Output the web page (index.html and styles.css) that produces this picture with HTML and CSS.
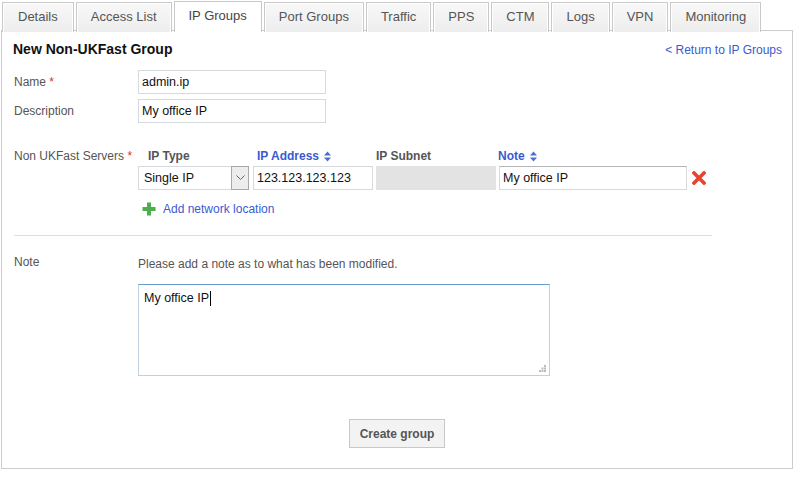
FILE: index.html
```html
<!DOCTYPE html>
<html>
<head>
<meta charset="utf-8">
<link rel="stylesheet" href="styles.css">
</head>
<body>
<div class="page">
  <div class="tabs">
    <div class="tab">Details</div>
    <div class="tab">Access List</div>
    <div class="tab active">IP Groups</div>
    <div class="tab">Port Groups</div>
    <div class="tab">Traffic</div>
    <div class="tab">PPS</div>
    <div class="tab">CTM</div>
    <div class="tab">Logs</div>
    <div class="tab">VPN</div>
    <div class="tab">Monitoring</div>
  </div>
  <div class="panel">
    <div class="head">
      <h1 class="title">New Non-UKFast Group</h1>
      <a class="return" href="#">&lt; Return to IP Groups</a>
    </div>

    <div class="row row-name">
      <label class="label">Name <span class="req">*</span></label>
      <input class="field" type="text" value="admin.ip">
    </div>
    <div class="row row-desc">
      <label class="label">Description</label>
      <input class="field" type="text" value="My office IP">
    </div>

    <div class="servers">
      <div class="label label-servers">Non UKFast Servers <span class="req">*</span></div>
      <div class="table">
        <div class="thead">
          <div class="th th-type">IP Type</div>
          <div class="th th-ip sortable">IP Address
            <svg class="sort" width="7" height="11" viewBox="0 0 7 11"><path d="M3.5 0.5 L7 4.5 H0 Z" fill="#4a6fd6"/><path d="M3.5 10.5 L7 6.5 H0 Z" fill="#4a6fd6"/></svg>
          </div>
          <div class="th th-subnet">IP Subnet</div>
          <div class="th th-note sortable">Note
            <svg class="sort" width="7" height="11" viewBox="0 0 7 11"><path d="M3.5 0.5 L7 4.5 H0 Z" fill="#4a6fd6"/><path d="M3.5 10.5 L7 6.5 H0 Z" fill="#4a6fd6"/></svg>
          </div>
        </div>
        <div class="trow">
          <div class="select">
            <span class="select-text">Single IP</span>
            <span class="select-btn">
              <svg width="9" height="6" viewBox="0 0 9 6"><path d="M0.5 0.5 L4.5 4.5 L8.5 0.5" fill="none" stroke="#666" stroke-width="1"/></svg>
            </span>
          </div>
          <input class="cell cell-ip" type="text" value="123.123.123.123">
          <div class="cell cell-subnet"></div>
          <input class="cell cell-note" type="text" value="My office IP">
          <svg class="remove" width="14" height="14" viewBox="0 0 14 14"><path d="M2 2 L12 12 M12 2 L2 12" stroke="#e8432f" stroke-width="3.6" stroke-linecap="square"/></svg>
        </div>
        <a class="add" href="#">
          <svg class="plus" width="14" height="14" viewBox="0 0 14 14"><path d="M7 0.5 V13.5 M0.5 7 H13.5" stroke="#4cae4c" stroke-width="4"/></svg>
          <span>Add network location</span>
        </a>
      </div>
    </div>

    <hr class="sep">

    <div class="note-row">
      <div class="label label-note">Note</div>
      <div class="note-body">
        <p class="hint">Please add a note as to what has been modified.</p>
        <div class="textarea">My office IP<span class="caret"></span>
          <svg class="grip" width="7" height="7" viewBox="0 0 7 7"><rect x="5" y="0" width="2" height="2" fill="#bbb"/><rect x="2.5" y="2.5" width="2" height="2" fill="#bbb"/><rect x="5" y="2.5" width="2" height="2" fill="#bbb"/><rect x="0" y="5" width="2" height="2" fill="#bbb"/><rect x="2.5" y="5" width="2" height="2" fill="#bbb"/><rect x="5" y="5" width="2" height="2" fill="#bbb"/></svg>
        </div>
      </div>
    </div>

    <div class="actions">
      <button class="btn" type="button">Create group</button>
    </div>
  </div>
</div>
</body>
</html>
```

FILE: styles.css
```css
* { box-sizing: border-box; }
html, body { margin: 0; padding: 0; background: #fff; }
body {
  font-family: "Liberation Sans", Arial, sans-serif;
  font-size: 12px;
  color: #555;
}
.page {
  width: 793px;
  padding: 1px 0 0 1px;
}
.tabs {
  display: flex;
  gap: 2px;
  padding-left: 1px;
  height: 30px;
  position: relative;
  z-index: 2;
}
.tab {
  height: 30px;
  margin-top: 1px;
  padding: 0 14px;
  line-height: 27px;
  font-size: 13px;
  color: #555;
  border: 1px solid #c9c9c9;
  border-bottom: none;
  background: linear-gradient(#f8f8f8, #ededed);
  box-shadow: inset 1px 1px 0 #fff, inset -1px 0 0 #fff;
}
.tab:first-child { padding: 0 15px; }
.tab.active {
  margin-top: 0;
  height: 31px;
  background: #fff;
  color: #444;
  box-shadow: none;
}
.panel {
  border: 1px solid #ccc;
  height: 439px;
  margin-top: -1px;
  padding: 9px 10px 0 12px;
  position: relative;
}
.head {
  display: flex;
  justify-content: space-between;
  align-items: center;
  height: 18px;
}
.title {
  margin: 0 0 0 -1px;
  font-size: 14px;
  font-weight: bold;
  color: #111;
  line-height: 18px;
}
.return {
  color: #3a5bd0;
  text-decoration: none;
  font-size: 12px;
  margin-top: 2px;
}
.row {
  display: flex;
  align-items: center;
}
.row-name { margin-top: 12px; }
.row-desc { margin-top: 5px; }
.label {
  width: 124px;
  flex: none;
  color: #555;
}
.req { color: #d33; }
.field {
  width: 188px;
  height: 24px;
  border: 1px solid #d6dadf;
  padding: 0 3px;
  font-family: inherit;
  font-size: 12.5px;
  color: #111;
  outline: none;
}
.servers {
  display: flex;
  margin-top: 26px;
}
.label-servers { line-height: 14px; }
.thead {
  display: flex;
  height: 14px;
  line-height: 14px;
  font-weight: bold;
  color: #555;
}
.th { display: flex; align-items: center; gap: 5px; }
.th-type { width: 115px; padding-left: 10px; }
.th-ip { width: 123px; padding-left: 4px; color: #3a5bd0; }
.th-subnet { width: 122px; }
.th-note { color: #3a5bd0; }
.sort { display: block; }
.trow {
  display: flex;
  align-items: center;
  margin-top: 3px;
  height: 24px;
}
.select {
  width: 111px;
  height: 24px;
  display: flex;
  border: 1px solid #d6dadf;
  background: #fff;
}
.select-text {
  flex: 1;
  padding-left: 5px;
  line-height: 22px;
  font-size: 12.5px;
  color: #111;
}
.select-btn {
  width: 18px;
  height: 24px;
  margin: -1px -1px 0 0;
  border: 1px solid #a9a9a9;
  background: #ededed;
  display: flex;
  align-items: center;
  justify-content: center;
}
.cell {
  height: 24px;
  border: 1px solid #d6dadf;
  font-family: inherit;
  font-size: 12.5px;
  color: #111;
  padding: 0 3px;
  outline: none;
}
.cell-ip { width: 120px; margin-left: 4px; }
.cell-subnet { width: 120px; margin-left: 3px; background: #e3e3e3; border-color: #e3e3e3; }
.cell-note { width: 188px; margin-left: 3px; border-top-color: #b5b5b5; }
.remove { margin-left: 5px; }
.add {
  display: flex;
  align-items: center;
  gap: 7px;
  margin: 12px 0 0 4px;
  color: #3a5bd0;
  text-decoration: none;
  height: 14px;
}
.sep {
  border: none;
  border-top: 1px solid #ddd;
  margin: 19px 0 0 0;
  width: 698px;
}
.note-row {
  display: flex;
  margin-top: 19px;
}
.label-note { line-height: 14px; }
.hint {
  margin: 2px 0 0 0;
  line-height: 14px;
}
.textarea {
  position: relative;
  margin-top: 13px;
  width: 412px;
  height: 92px;
  border: 1px solid #c2d1e0;
  border-top-color: #6a9bd2;
  padding: 6px 5px;
  font-size: 12.5px;
  color: #111;
  line-height: 15px;
}
.caret {
  display: inline-block;
  width: 1px;
  height: 15px;
  background: #000;
  vertical-align: top;
  margin-left: 1px;
}
.grip {
  position: absolute;
  right: 3px;
  bottom: 3px;
}
.actions {
  display: flex;
  justify-content: center;
  margin-top: 43px;
  margin-left: -2px;
}
.btn {
  width: 96px;
  height: 29px;
  border: 1px solid #c8c8c8;
  background: #f3f3f3;
  font-family: inherit;
  font-size: 12px;
  font-weight: bold;
  color: #555;
}
```
